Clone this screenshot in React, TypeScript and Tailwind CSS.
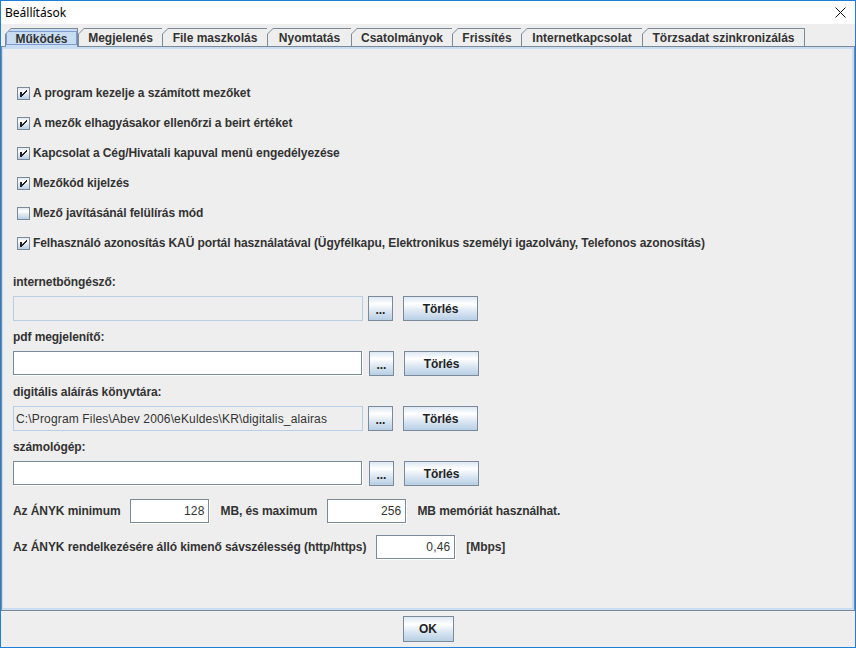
import React from 'react';

const tabs = [
  { label: 'Működés', w: 'w-[73px]' },
  { label: 'Megjelenés', w: 'w-[84px]' },
  { label: 'File maszkolás', w: 'w-[105px]' },
  { label: 'Nyomtatás', w: 'w-[84px]' },
  { label: 'Csatolmányok', w: 'w-[101px]' },
  { label: 'Frissítés', w: 'w-[69px]' },
  { label: 'Internetkapcsolat', w: 'w-[121px]' },
  { label: 'Törzsadat szinkronizálás', w: 'w-[163px]' },
];

const checks = [
  { label: 'A program kezelje a számított mezőket', on: true },
  { label: 'A mezők elhagyásakor ellenőrzi a beirt értéket', on: true },
  { label: 'Kapcsolat a Cég/Hivatali kapuval menü engedélyezése', on: true },
  { label: 'Mezőkód kijelzés', on: true },
  { label: 'Mező javításánál felülírás mód', on: false },
  {
    label:
      'Felhasználó azonosítás KAÜ portál használatával (Ügyfélkapu, Elektronikus személyi igazolvány, Telefonos azonosítás)',
    on: true,
  },
];

const paths = [
  { label: 'internetböngésző:', value: '', disabled: true },
  { label: 'pdf megjelenítő:', value: '', disabled: false },
  {
    label: 'digitális aláírás könyvtára:',
    value: 'C:\\Program Files\\Abev 2006\\eKuldes\\KR\\digitalis_alairas',
    disabled: true,
  },
  { label: 'számológép:', value: '', disabled: false },
];

function Tab({ label, w, selected, last }: { label: string; w: string; selected: boolean; last: boolean }) {
  return (
    <div
      className={`relative h-[19px] shrink-0 ${w} bg-[#7a8a99] [clip-path:polygon(6px_0,100%_0,100%_100%,0_100%,0_6px)]`}
    >
      <div
        className={`absolute left-px top-px ${last || selected ? 'right-px' : 'right-0'} ${
          selected ? 'bottom-0 bg-[#c8ddf2]' : 'bottom-px bg-[#eeeeee]'
        } [clip-path:polygon(5px_0,100%_0,100%_100%,0_100%,0_5px)] flex items-center justify-center pt-px`}
      >
        {selected && <div className="absolute left-0 right-0 top-[2px] bottom-[2px] border border-[#7f9bd1]" />}
        <span className="relative font-bold text-[12px] text-[#333333] leading-[14px]">{label}</span>
      </div>
    </div>
  );
}

function CheckBox({ on }: { on: boolean }) {
  return (
    <span className="relative block w-[13px] h-[13px] shrink-0 border border-[#7a8a99] bg-[linear-gradient(to_bottom,#dde8f3_0%,#ffffff_30%,#dde8f3_60%,#b8cfe5_100%)]">
      {on && (
        <svg className="absolute -left-px -top-px" width="13" height="13" viewBox="0 0 13 13" shapeRendering="crispEdges">
          <g fill="#222222">
            <rect x="3" y="5" width="2" height="5" />
            <rect x="9" y="3" width="1" height="2" />
            <rect x="8" y="4" width="1" height="2" />
            <rect x="7" y="5" width="1" height="2" />
            <rect x="6" y="6" width="1" height="2" />
            <rect x="5" y="7" width="1" height="2" />
          </g>
        </svg>
      )}
    </span>
  );
}

function Button({ children, className }: { children: React.ReactNode; className: string }) {
  return (
    <div
      className={`flex items-center justify-center shrink-0 border border-[#7a8a99] bg-[linear-gradient(to_bottom,#dde8f3_0%,#ffffff_30%,#dde8f3_60%,#b8cfe5_100%)] font-bold text-[12px] text-[#222222] ${className}`}
    >
      {children}
    </div>
  );
}

function Field({ value, disabled, className }: { value: string; disabled: boolean; className: string }) {
  if (disabled) {
    return (
      <div
        className={`flex items-center shrink-0 border border-[#b8cfe5] bg-[#eeeeee] pl-[2px] text-[12px] tracking-[0.15px] font-normal text-[#333333] whitespace-nowrap ${className}`}
      >
        {value}
      </div>
    );
  }
  return (
    <div
      className={`flex items-center shrink-0 border border-[#7a8a99] bg-white shadow-[1px_1px_0_#ffffff] mr-px mb-px pl-[2px] text-[12px] font-normal text-[#333333] ${className}`}
    >
      {value}
    </div>
  );
}

function NumField({ value, className }: { value: string; className: string }) {
  return (
    <div
      className={`flex items-center justify-end shrink-0 border border-[#7a8a99] bg-white shadow-[1px_1px_0_#ffffff] mr-px pr-[4px] text-[12px] font-normal tracking-[0.15px] text-[#333333] ${className}`}
    >
      {value}
    </div>
  );
}

export default function App() {
  return (
    <div className="w-[856px] h-[648px] flex flex-col border border-[#1f7fd6] bg-[#eeeeee] font-['Liberation_Sans',Arial,sans-serif] text-[#333333] overflow-hidden">
      {/* title bar */}
      <div className="h-[23px] shrink-0 bg-white flex items-center justify-between pl-[4px] pr-[9px]">
        <span className="font-['Noto_Sans',sans-serif] text-[12px] text-black">Beállítások</span>
        <svg width="11" height="11" viewBox="0 0 11 11">
          <path d="M0.5 0.5 L10.5 10.5 M10.5 0.5 L0.5 10.5" stroke="#111111" strokeWidth="1" />
        </svg>
      </div>

      {/* tabs */}
      <div className="relative z-10 flex h-[19px] mt-[4px] -mb-px pl-[4px] shrink-0">
        {tabs.map((t, i) => (
          <Tab key={t.label} label={t.label} w={t.w} selected={i === 0} last={i === tabs.length - 1} />
        ))}
      </div>

      {/* content panel */}
      <div className="h-[565px] shrink-0 border border-[#7a8a99]">
        <div className="h-full border-t-2 border-r-2 border-b-2 border-l border-[#c8ddf2] bg-[#eeeeee] pt-[29px] tracking-[-0.08px]">
          {checks.map((c) => (
            <div key={c.label} className="flex items-center h-[30px] pl-[14px]">
              <CheckBox on={c.on} />
              <span className="ml-[3px] font-bold text-[12px] leading-[14px] whitespace-nowrap">{c.label}</span>
            </div>
          ))}

          <div className="mt-[8px] pl-[10px]">
            {paths.map((p) => (
              <div key={p.label}>
                <div className="h-[30px] pt-[9px] font-bold text-[12px] leading-[14px]">{p.label}</div>
                <div className="flex h-[25px]">
                  <Field value={p.value} disabled={p.disabled} className={p.disabled ? 'w-[350px] h-[25px]' : 'w-[349px] h-[24px]'} />
                  <Button className={`${p.disabled ? 'ml-[5px]' : 'ml-[6px]'} w-[25px] h-[25px] pt-[3px]`}>...</Button>
                  <Button className="ml-[10px] w-[75px] h-[25px]">Törlés</Button>
                </div>
              </div>
            ))}

            <div className="mt-[12px] flex items-center gap-[10px] h-[25px] font-bold text-[12px]">
              <span>Az ÁNYK minimum</span>
              <NumField value="128" className="w-[79px] h-[24px]" />
              <span>MB, és maximum</span>
              <NumField value="256" className="w-[79px] h-[24px]" />
              <span>MB memóriát használhat.</span>
            </div>

            <div className="mt-[11px] flex items-center gap-[10px] h-[25px] font-bold text-[12px]">
              <span>Az ÁNYK rendelkezésére álló kimenő sávszélesség (http/https)</span>
              <NumField value="0,46" className="w-[79px] h-[24px]" />
              <span>[Mbps]</span>
            </div>
          </div>
        </div>
      </div>

      {/* bottom buttons */}
      <div className="flex-1 flex justify-center pt-[5px]">
        <Button className="w-[51px] h-[26px]">OK</Button>
      </div>
    </div>
  );
}
